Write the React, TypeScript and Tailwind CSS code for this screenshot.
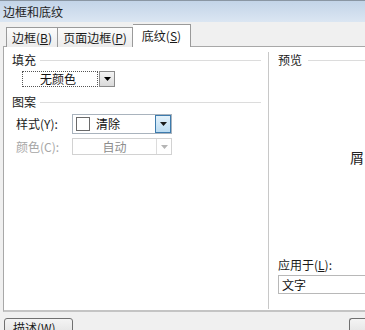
import React from "react";

const font = { fontFamily: '"Noto Sans CJK SC", "Noto Sans", sans-serif' };

function Tri({ color = "#000" }: { color?: string }) {
  return (
    <svg width="7" height="4" viewBox="0 0 7 4">
      <path d="M0 0 H7 L3.5 4 Z" fill={color} />
    </svg>
  );
}

function GroupHeader({ label }: { label: string }) {
  return (
    <div className="flex items-center h-[14px]">
      <span className="text-[12px] leading-[14px] text-[#1a1a1a]">{label}</span>
      <div className="flex-1 h-px bg-[#dcdcdc] ml-[4px]" />
    </div>
  );
}

export default function App() {
  return (
    <div className="w-[365px] h-[330px] bg-[#f0f0f0] overflow-hidden flex flex-col" style={font}>
      {/* Title bar */}
      <div className="h-[22px] shrink-0 border-t border-[#8a96a3] bg-gradient-to-b from-[#c3d4e8] to-[#dbe6f2] flex items-center pl-[3px]">
        <span className="text-[12px] text-[#1e1e1e] leading-none">边框和底纹</span>
      </div>
      {/* Tabs */}
      <div className="h-[25px] shrink-0 flex items-end pl-[6px] relative z-10 -mb-px">
        <div className="h-[20px] w-[52px] border border-b-0 border-[#9a9a9a] bg-gradient-to-b from-[#fbfbfb] to-[#ececec] flex items-center justify-center text-[12px] text-[#1a1a1a] leading-none">
          边框(<span className="underline">B</span>)
        </div>
        <div className="h-[20px] w-[75px] border border-b-0 border-l-0 border-[#9a9a9a] bg-gradient-to-b from-[#fbfbfb] to-[#ececec] flex items-center justify-center text-[12px] text-[#1a1a1a] leading-none">
          页面边框(<span className="underline">P</span>)
        </div>
        <div className="h-[23px] w-[58px] border border-b-0 border-l-0 border-[#9a9a9a] bg-white flex items-center justify-center text-[12px] text-[#1a1a1a] leading-none">
          底纹(<span className="underline">S</span>)
        </div>
      </div>
      {/* Panel */}
      <div className="ml-[3px] h-[266px] shrink-0 bg-white border-l border-t border-b-2 border-[#a8a8a8] border-b-[#c4c4c4] flex">
        {/* Left column */}
        <div className="w-[257px] shrink-0 flex flex-col pl-[8px] pt-[6px]">
          <GroupHeader label="填充" />
          <div className="mt-[4px] ml-[10px] flex h-[16px] w-[93px]">
            <div className="flex-1 border border-dotted border-[#555] flex items-center justify-center text-[12px] leading-none text-[#111] pr-[4px]">
              无颜色
            </div>
            <div className="w-[16px] ml-[1px] border border-[#8a8a8a] bg-gradient-to-b from-[#f4f4f4] to-[#dadada] flex items-center justify-center">
              <Tri />
            </div>
          </div>
          <div className="mt-[8px]">
            <GroupHeader label="图案" />
          </div>
          <div className="mt-[5px] flex items-center h-[20px]">
            <span className="w-[60px] pl-[4px] text-[12px] leading-none text-[#1a1a1a]">样式(Y):</span>
            <div className="w-[100px] h-[20px] border border-[#a9b3bd] flex items-center">
              <div className="ml-[3px] w-[14px] h-[14px] border border-[#6a6a6a] bg-white" />
              <span className="ml-[6px] text-[12px] leading-none text-[#111]">清除</span>
              <div className="ml-auto w-[16px] h-[18px] border border-[#3d7bad] bg-gradient-to-b from-[#e4f2fb] to-[#bcdcf2] flex items-center justify-center">
                <Tri color="#1b1b1b" />
              </div>
            </div>
          </div>
          <div className="mt-[4px] flex items-center h-[17px]">
            <span className="w-[60px] pl-[4px] text-[12px] leading-none text-[#a6a6a6]">颜色(C):</span>
            <div className="w-[100px] h-[17px] border border-[#d2d2d2] flex items-center">
              <span className="flex-1 text-center text-[12px] leading-none text-[#8d8d8d]">自动</span>
              <div className="w-[15px] h-[15px] border-l border-[#dcdcdc] flex items-center justify-center">
                <Tri color="#b5b5b5" />
              </div>
            </div>
          </div>
        </div>
        {/* Separator */}
        <div className="w-[1px] bg-[#c8c8c8] mt-[5px] mb-[1px] ml-[7px] shrink-0" />
        <div className="w-[1px] bg-[#ffffff] shrink-0" />
        {/* Right column */}
        <div className="flex-1 flex flex-col pl-[8px] pt-[6px] overflow-hidden">
          <div className="flex items-center h-[14px]">
            <span className="text-[12px] leading-[14px] text-[#1a1a1a]">预览</span>
            <div className="flex-1 h-px bg-[#dcdcdc] ml-[6px]" />
          </div>
          <div className="mt-[82px] h-[16px] pl-[72px] whitespace-nowrap text-[14px] leading-[16px] text-[#222]">
            屑
          </div>
          <div className="mt-[93px] h-[14px] text-[12px] leading-[14px] text-[#1a1a1a] whitespace-nowrap">
            应用于(<span className="underline">L</span>):
          </div>
          <div className="mt-[3px] h-[19px] border border-r-0 border-[#b8b8b8] flex items-center pl-[3px] text-[12px] leading-none text-[#111]">
            文字
          </div>
        </div>
      </div>
      {/* Bottom buttons */}
      <div className="flex mt-[6px] pl-[4px]">
        <div className="w-[69px] h-[22px] border border-[#707070] rounded-[3px] bg-gradient-to-b from-[#f4f4f4] to-[#dedede] pl-[8px] pt-[3px] text-[12px] leading-none text-[#1a1a1a] whitespace-nowrap">
          描述(W)...
        </div>
        <div className="ml-auto w-[16px] h-[22px] border border-r-0 border-[#707070] rounded-l-[3px] bg-gradient-to-b from-[#f4f4f4] to-[#dedede]" />
      </div>
    </div>
  );
}
